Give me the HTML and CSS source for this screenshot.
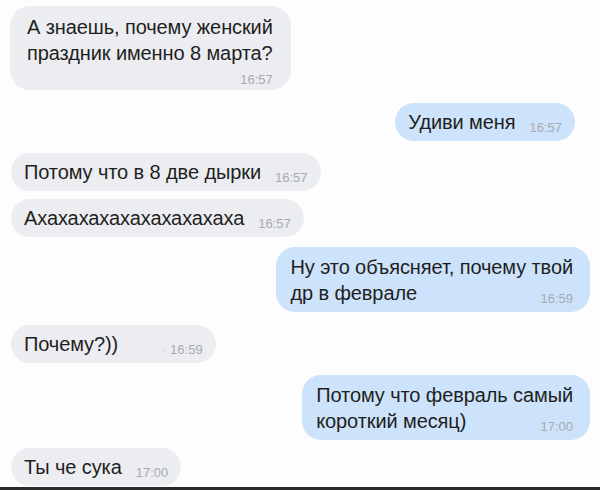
FILE: index.html
```html
<!DOCTYPE html>
<html lang="ru">
<head>
    <meta charset="UTF-8">
    <meta name="viewport" content="width=device-width, initial-scale=1.0">
    <title>Чат</title>
    <link rel="stylesheet" href="styles.css">
</head>
<body>
    <div class="chat">
        <div class="msg in multi first">
            <div class="text">А знаешь, почему женский<br>праздник именно 8 марта?</div>
            <div class="time-row"><span class="time">16:57</span></div>
        </div>

        <div class="msg out single gap-l">
            <span class="text">Удиви меня</span>
            <span class="time">16:57</span>
        </div>

        <div class="msg in single gap-m">
            <span class="text">Потому что в 8 две дырки</span>
            <span class="time">16:57</span>
        </div>

        <div class="msg in single gap-s">
            <span class="text">Ахахахахахахахахахаха</span>
            <span class="time">16:57</span>
        </div>

        <div class="msg out multi gap-s">
            <div class="text">Ну это объясняет, почему твой</div>
            <div class="last-line">
                <span class="text">др в феврале</span>
                <span class="time">16:59</span>
            </div>
        </div>

        <div class="msg in single gap-l">
            <span class="text">Почему?))</span>
            <span class="time wide"><span class="dot">·</span> 16:59</span>
        </div>

        <div class="msg out multi gap-m">
            <div class="text">Потому что февраль самый</div>
            <div class="last-line">
                <span class="text">короткий месяц)</span>
                <span class="time">17:00</span>
            </div>
        </div>

        <div class="msg in single gap-s">
            <span class="text">Ты че сука</span>
            <span class="time">17:00</span>
        </div>
    </div>
    <div class="bottom-bar"></div>
</body>
</html>
```

FILE: styles.css
```css
body {
    margin: 0;
    background-color: #fdfdfd;
    font-family: "Liberation Sans", Arial, sans-serif;
    color: #1f1f21;
    height: 490px;
    overflow: hidden;
    display: flex;
    flex-direction: column;
}

.chat {
    flex: 1;
    display: flex;
    flex-direction: column;
    padding: 6px 10px 0 10px;
}

.msg {
    font-size: 20px;
    line-height: 24px;
    letter-spacing: -0.1px;
}

.msg.in {
    align-self: flex-start;
    background-color: #ecedf1;
    margin-left: 1px;
}

.msg.out {
    align-self: flex-end;
    background-color: #cde3fb;
}

.msg.single {
    display: flex;
    align-items: baseline;
    gap: 14px;
    padding: 7px 13px;
    border-radius: 19px;
}

.msg.multi {
    padding: 7px 17px 6px 14px;
    border-radius: 19px;
    line-height: 26px;
}

.msg.first {
    margin-left: 0;
    padding: 8px 18px 5px 17px;
    border-radius: 20px;
}

.msg.out.single {
    margin-right: 15px;
}

.time-row {
    text-align: right;
    line-height: 16px;
}

.last-line {
    display: flex;
    justify-content: space-between;
    align-items: baseline;
}

.time {
    font-size: 13px;
    line-height: 16px;
    color: #a7aab0;
    letter-spacing: 0;
    position: relative;
    top: 3px;
}

.time.wide {
    margin-left: 30px;
}

.dot {
    color: #c4c6ca;
}

.gap-s {
    margin-top: 8px;
}

.gap-m {
    margin-top: 12px;
}

.gap-l {
    margin-top: 13px;
}

.msg.out.multi.gap-s {
    margin-top: 10px;
}

.bottom-bar {
    height: 3px;
    background-color: #2a2a2c;
}
```
